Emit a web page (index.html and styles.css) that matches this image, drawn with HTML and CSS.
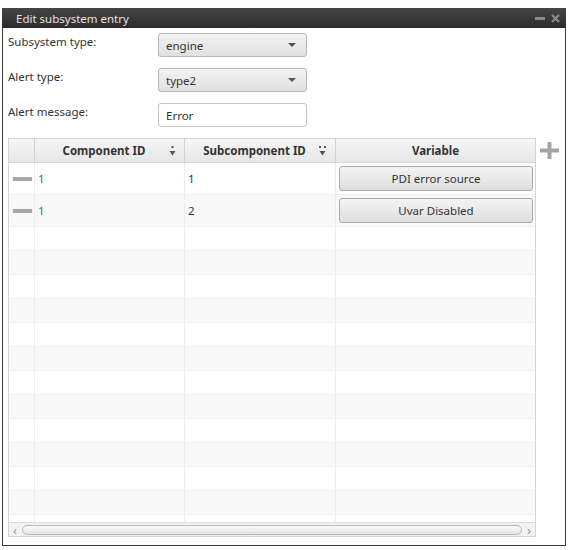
FILE: index.html
```html
<!DOCTYPE html>
<html lang="en">
<head>
  <meta charset="UTF-8">
  <title>Edit subsystem entry</title>
  <link rel="stylesheet" href="styles.css">
</head>
<body>
  <div class="window">
    <div class="titlebar">
      <span class="title">Edit subsystem entry</span>
      <span class="win-btns">
        <span class="win-min"></span>
        <svg class="win-close" width="9" height="9" viewBox="0 0 9 9"><path d="M1 1L8 8M8 1L1 8" stroke="#8a8a8a" stroke-width="2.4"/></svg>
      </span>
    </div>

    <div class="content">
      <div class="form-row">
        <label>Subsystem type:</label>
        <div class="combo"><span>engine</span><span class="caret"></span></div>
      </div>
      <div class="form-row">
        <label>Alert type:</label>
        <div class="combo"><span>type2</span><span class="caret"></span></div>
      </div>
      <div class="form-row">
        <label>Alert message:</label>
        <div class="textfield">Error</div>
      </div>

      <div class="table-wrap">
        <div class="grid">
          <div class="head">
            <div class="cell"></div>
            <div class="cell sorted">Component ID
              <svg class="sort" width="7" height="11" viewBox="0 0 7 11"><rect x="2.5" y="0" width="2" height="2" fill="#555"/><path d="M0.5 5H6.5L3.5 9.5Z" fill="#555"/></svg>
            </div>
            <div class="cell sorted">Subcomponent ID
              <svg class="sort" width="9" height="11" viewBox="0 0 9 11"><rect x="1" y="0" width="2" height="2" fill="#555"/><rect x="6" y="0" width="2" height="2" fill="#555"/><path d="M1.5 5H7.5L4.5 9.5Z" fill="#555"/></svg>
            </div>
            <div class="cell">Variable</div>
          </div>

          <div class="rows">
            <div class="row tall">
              <div class="cell"><span class="handle"></span></div>
              <div class="cell id">1</div>
              <div class="cell">1</div>
              <div class="cell"><button class="var-btn">PDI error source</button></div>
            </div>
            <div class="row tall">
              <div class="cell"><span class="handle"></span></div>
              <div class="cell id">1</div>
              <div class="cell">2</div>
              <div class="cell"><button class="var-btn">Uvar Disabled</button></div>
            </div>

            <div class="row"><div class="cell"></div><div class="cell"></div><div class="cell"></div><div class="cell"></div></div>
            <div class="row"><div class="cell"></div><div class="cell"></div><div class="cell"></div><div class="cell"></div></div>
            <div class="row"><div class="cell"></div><div class="cell"></div><div class="cell"></div><div class="cell"></div></div>
            <div class="row"><div class="cell"></div><div class="cell"></div><div class="cell"></div><div class="cell"></div></div>
            <div class="row"><div class="cell"></div><div class="cell"></div><div class="cell"></div><div class="cell"></div></div>
            <div class="row"><div class="cell"></div><div class="cell"></div><div class="cell"></div><div class="cell"></div></div>
            <div class="row"><div class="cell"></div><div class="cell"></div><div class="cell"></div><div class="cell"></div></div>
            <div class="row"><div class="cell"></div><div class="cell"></div><div class="cell"></div><div class="cell"></div></div>
            <div class="row"><div class="cell"></div><div class="cell"></div><div class="cell"></div><div class="cell"></div></div>
            <div class="row"><div class="cell"></div><div class="cell"></div><div class="cell"></div><div class="cell"></div></div>
            <div class="row"><div class="cell"></div><div class="cell"></div><div class="cell"></div><div class="cell"></div></div>
            <div class="row"><div class="cell"></div><div class="cell"></div><div class="cell"></div><div class="cell"></div></div>
            <div class="row"><div class="cell"></div><div class="cell"></div><div class="cell"></div><div class="cell"></div></div>
          </div>

          <div class="hscroll">
            <span class="arrow">&#8249;</span>
            <span class="thumb"></span>
            <span class="arrow">&#8250;</span>
          </div>
        </div>

        <svg class="add" width="19" height="17" viewBox="0 0 19 17"><path d="M7.5 0H11.5V6.5H19V10.5H11.5V17H7.5V10.5H0V6.5H7.5Z" fill="#a3a3a3"/></svg>
      </div>
    </div>
  </div>
</body>
</html>
```

FILE: styles.css
```css
body {
  margin: 0;
  padding: 8px 0 0 2px;
  background: #fff;
  font-family: "Noto Sans", "Open Sans", sans-serif;
  font-size: 11.5px;
  color: #333;
}
.window {
  width: 562px;
  height: 537px;
  border: 1px solid #3a3a3a;
  border-top: none;
  background: #fff;
  display: flex;
  flex-direction: column;
}
.titlebar {
  height: 20px;
  margin: 0 -1px;
  background: linear-gradient(#454545, #2c2c2c);
  display: flex;
  align-items: center;
  justify-content: space-between;
  padding: 0 6px 0 14px;
}
.title {
  color: #e2e2e2;
  font-size: 11.5px;
}
.win-btns {
  display: flex;
  align-items: center;
  gap: 6px;
}
.win-min {
  width: 10px;
  height: 3px;
  background: #8a8a8a;
  margin-top: 1px;
}
.content {
  padding: 5px 0 0 5px;
}
.form-row {
  display: flex;
  align-items: flex-start;
  height: 24px;
  margin-bottom: 11px;
}
.form-row label {
  width: 150px;
  padding-top: 1px;
}
.combo, .textfield {
  height: 22px;
  width: 133px;
  border: 1px solid #b8b8b8;
  border-radius: 3px;
  display: flex;
  align-items: center;
  justify-content: space-between;
  padding: 0 7px;
}
.combo {
  background: linear-gradient(#f3f3f3, #e0e0e0);
}
.textfield {
  background: #fff;
  border-color: #c4c4c4;
}
.caret {
  width: 0;
  height: 0;
  border-left: 4px solid transparent;
  border-right: 4px solid transparent;
  border-top: 4px solid #555;
  margin-right: 3px;
}
.table-wrap {
  display: flex;
  align-items: flex-start;
  gap: 4px;
}
.grid {
  width: 526px;
  height: 398px;
  border: 1px solid #d4d4d4;
  border-bottom: none;
  display: flex;
  flex-direction: column;
}
.head, .row {
  display: grid;
  grid-template-columns: 26px 150px 151px 1fr;
  flex-shrink: 0;
}
.head {
  height: 23px;
  background: linear-gradient(#f6f6f6, #e6e6e6);
  border-bottom: 1px solid #d6d6d6;
  font-weight: bold;
  color: #333;
}
.head .cell {
  display: flex;
  align-items: center;
  justify-content: center;
  position: relative;
  border-right: 1px solid #d0d0d0;
}
.head .cell.sorted {
  padding-right: 11px;
}
.head .cell:last-child {
  border-right: none;
}
.sort {
  position: absolute;
  right: 8px;
  top: 7px;
}
.rows {
  flex: 1;
  min-height: 0;
  overflow: hidden;
}
.row {
  height: 24px;
  background: #fff;
}
.row:nth-child(even) {
  background: #f8f8f8;
}
.row.tall {
  height: 32px;
}
.row .cell {
  border-right: 1px solid #ececec;
  border-bottom: 1px solid #f0f0f0;
  display: flex;
  align-items: center;
  padding-left: 3px;
}
.row .cell:first-child {
  padding-left: 4px;
}
.row .cell:last-child {
  border-right: none;
  padding: 0 2px 0 3px;
}
.row .id {
  color: #2f6db5;
}
.handle {
  width: 19px;
  height: 4px;
  background: #a8a6a8;
}
.var-btn {
  width: 100%;
  height: 25px;
  font: inherit;
  color: #333;
  background: linear-gradient(#f4f4f4, #dedede);
  border: 1px solid #ababab;
  border-radius: 3px;
}
.hscroll {
  height: 13px;
  flex-shrink: 0;
  background: #f2f2f2;
  border-top: 1px solid #dcdcdc;
  border-bottom: 1px solid #d4d4d4;
  display: flex;
  align-items: center;
  gap: 3px;
  padding: 0 2px;
  color: #999;
}
.arrow {
  font-size: 13px;
  line-height: 10px;
  width: 8px;
  text-align: center;
}
.thumb {
  flex: 1;
  height: 8px;
  border: 1px solid #b9b9b9;
  border-radius: 5px;
  background: linear-gradient(#fafafa, #e4e4e4);
}
.add {
  margin-top: 4px;
}
```
